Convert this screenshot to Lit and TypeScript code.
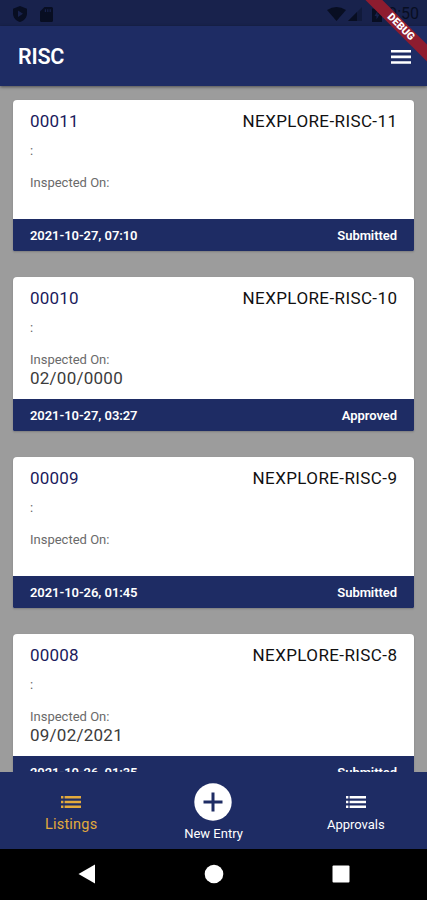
import { LitElement, html, css, svg } from "lit";
import { customElement, property } from "lit/decorators.js";

interface Entry {
  id: string;
  ref: string;
  inspected: string;
  date: string;
  status: string;
}

const ENTRIES: Entry[] = [
  { id: "00011", ref: "NEXPLORE-RISC-11", inspected: "", date: "2021-10-27, 07:10", status: "Submitted" },
  { id: "00010", ref: "NEXPLORE-RISC-10", inspected: "02/00/0000", date: "2021-10-27, 03:27", status: "Approved" },
  { id: "00009", ref: "NEXPLORE-RISC-9", inspected: "", date: "2021-10-26, 01:45", status: "Submitted" },
  { id: "00008", ref: "NEXPLORE-RISC-8", inspected: "09/02/2021", date: "2021-10-26, 01:35", status: "Submitted" },
];

@customElement("entry-card")
export class EntryCard extends LitElement {
  @property({ attribute: false }) entry!: Entry;

  static styles = css`
    :host {
      display: block;
      flex: none;
      border-radius: 4px 4px 1px 1px;
      overflow: hidden;
      background: #fff;
      box-shadow: 0 1px 2px rgba(0, 0, 0, 0.2);
    }
    .body {
      box-sizing: border-box;
      height: 119px;
      padding: 11px 17px 0;
    }
    .body.filled {
      height: 122px;
    }
    .row {
      display: flex;
      justify-content: space-between;
      align-items: center;
    }
    .head {
      height: 20px;
      font-size: 17px;
      color: #111;
      letter-spacing: 0.2px;
    }
    .id {
      color: #1a1a5c;
    }
    .ref {
      letter-spacing: 0.4px;
      margin-right: -0.4px;
    }
    .sub {
      height: 16px;
      margin-top: 12px;
      font-size: 13px;
      line-height: 16px;
      color: #666;
    }
    .label {
      height: 16px;
      margin-top: 16px;
      font-size: 13px;
      line-height: 16px;
      color: #6a6a6a;
    }
    .value {
      height: 20px;
      font-size: 17px;
      line-height: 20px;
      letter-spacing: 0.25px;
      color: #3c3c3c;
    }
    .foot {
      height: 32px;
      padding: 0 17px;
      background: #1e2c64;
      color: #fff;
      font-size: 13px;
      font-weight: 600;
      letter-spacing: -0.06px;
    }
  `;

  render() {
    const e = this.entry;
    return html`
      <div class="body ${e.inspected ? "filled" : ""}">
        <div class="row head"><span class="id">${e.id}</span><span class="ref">${e.ref}</span></div>
        <div class="sub">:</div>
        <div class="label">Inspected On:</div>
        <div class="value">${e.inspected}</div>
      </div>
      <div class="row foot"><span>${e.date}</span><span>${e.status}</span></div>
    `;
  }
}

const listIcon = svg`<path d="M0 0h2.4v2.6H0zM3.6 0H20v2.6H3.6zM0 4.7h2.4v2.6H0zM3.6 4.7H20v2.6H3.6zM0 9.4h2.4V12H0zM3.6 9.4H20V12H3.6z" fill="currentColor"/>`;

@customElement("app-root")
export class AppRoot extends LitElement {
  static styles = css`
    :host {
      position: relative;
      display: flex;
      flex-direction: column;
      width: 427px;
      height: 900px;
      overflow: hidden;
      background: #9c9c9c;
      font-family: Roboto, sans-serif;
    }
    svg {
      display: block;
    }
    .status {
      flex: none;
      display: flex;
      justify-content: space-between;
      align-items: center;
      box-sizing: border-box;
      height: 26px;
      padding: 2px 8px 0 13px;
      background: #18224c;
      color: #080e22;
    }
    .group {
      display: flex;
      align-items: center;
    }
    .left {
      gap: 13px;
    }
    .wifi {
      margin-right: 2px;
    }
    .cell {
      margin-right: 10px;
    }
    .clock {
      margin-left: 6px;
      font-size: 16px;
      line-height: 24px;
    }
    .bar {
      flex: none;
      display: flex;
      justify-content: space-between;
      align-items: center;
      height: 60px;
      padding: 2px 16px 0 18px;
      box-sizing: border-box;
      background: #1e2c64;
      color: #fff;
      box-shadow: 0 1px 3px rgba(0, 0, 0, 0.5);
      z-index: 1;
    }
    .title {
      font-size: 21.5px;
      font-weight: 600;
      line-height: 26px;
      letter-spacing: -0.2px;
    }
    .ribbon {
      position: absolute;
      top: 0;
      right: 0;
      z-index: 2;
      width: 62px;
      height: 62px;
      overflow: hidden;
    }
    .ribbon span {
      position: absolute;
      left: -14px;
      top: 20.5px;
      width: 100px;
      height: 11.5px;
      transform: rotate(45deg);
      background: #8e1c2f;
      color: #fff;
      text-align: center;
      font-size: 10.5px;
      font-weight: 900;
      line-height: 12px;
    }
    .list {
      flex: 1;
      min-height: 0;
      display: flex;
      flex-direction: column;
      gap: 26px;
      padding: 14px 13px 0;
      overflow: hidden;
    }
    .tabs {
      flex: none;
      display: grid;
      grid-template-columns: repeat(3, 1fr);
      height: 77px;
      background: #1e2c64;
      color: #fff;
      z-index: 1;
    }
    .tab {
      display: flex;
      flex-direction: column;
      align-items: center;
      padding-top: 24px;
      font-size: 13px;
      line-height: 16px;
      gap: 9px;
    }
    .tab.active {
      color: #e3aa3c;
      font-size: 14.5px;
      letter-spacing: 0.2px;
    }
    .tab.add {
      padding-top: 11px;
      gap: 5px;
    }
    .system {
      flex: none;
      display: grid;
      grid-template-columns: repeat(3, 127px);
      justify-content: center;
      align-items: center;
      justify-items: center;
      height: 51px;
      box-sizing: border-box;
      padding-bottom: 1px;
      background: #000;
    }
  `;

  render() {
    return html`
      <div class="status">
        <div class="group left">
          <svg width="14" height="16" viewBox="0 0 14 16"><path fill="currentColor" fill-rule="evenodd" d="M7 0L14 2.7V7.4C14 11.4 11 14.8 7 16C3 14.8 0 11.4 0 7.4V2.7ZM5 4.5V11L10 7.75Z"/></svg>
          <svg width="13" height="15" viewBox="0 0 13 15"><path fill="currentColor" fill-rule="evenodd" d="M4.5 0H11.5Q13 0 13 1.5V13.5Q13 15 11.5 15H1.5Q0 15 0 13.5V4.5ZM4.8 2.2V5H6V2.2ZM7.2 2.2V5H8.4V2.2ZM9.6 2.2V5H10.8V2.2Z"/></svg>
        </div>
        <div class="group">
          <svg class="wifi" width="19" height="14" viewBox="0 0 19 14"><path fill="currentColor" d="M0 3Q9.5-3 19 3L9.5 14Z"/></svg>
          <svg class="cell" width="14" height="14" viewBox="0 0 14 14"><path fill="currentColor" opacity=".4" d="M14 0V14H0Z"/><path fill="currentColor" d="M9 5V14H0Z"/></svg>
          <svg width="10" height="15" viewBox="0 0 10 15"><path fill="currentColor" fill-rule="evenodd" d="M3 0h4v1.5h3V15H0V1.5H3ZM5.5 4L2.500 9H4.500V12.500L7.500 7.500H5.500Z"/></svg>
          <span class="clock">9:50</span>
        </div>
      </div>
      <div class="bar">
        <span class="title">RISC</span>
        <svg width="20" height="14" viewBox="0 0 20 14"><path fill="#fff" d="M0 0h20v2.500H0zM0 5.600h20v2.600H0zM0 11.300h20v2.500H0z"/></svg>
      </div>
      <div class="ribbon"><span>DEBUG</span></div>
      <div class="list">${ENTRIES.map((e) => html`<entry-card .entry=${e}></entry-card>`)}</div>
      <div class="tabs">
        <div class="tab active"><svg width="20" height="12" viewBox="0 0 20 12">${listIcon}</svg><span>Listings</span></div>
        <div class="tab add">
          <svg width="38" height="38" viewBox="0 0 38 38"><circle cx="19" cy="19" r="18.700" fill="#fff"/><path fill="#1e2c64" d="M17.500 9.500h3v8H28.500v3h-8V28.500h-3v-8H9.500v-3h8z"/></svg>
          <span>New Entry</span>
        </div>
        <div class="tab"><svg width="20" height="12" viewBox="0 0 20 12">${listIcon}</svg><span>Approvals</span></div>
      </div>
      <div class="system">
        <svg width="18" height="20" viewBox="0 0 18 20"><path fill="#fff" d="M17 .5V19.500L.5 10Z"/></svg>
        <svg width="20" height="20" viewBox="0 0 20 20"><circle cx="10" cy="10" r="9.300" fill="#fff"/></svg>
        <svg width="18" height="18" viewBox="0 0 18 18"><rect x=".5" y=".5" width="17" height="17" rx="1" fill="#fff"/></svg>
      </div>
    `;
  }
}
